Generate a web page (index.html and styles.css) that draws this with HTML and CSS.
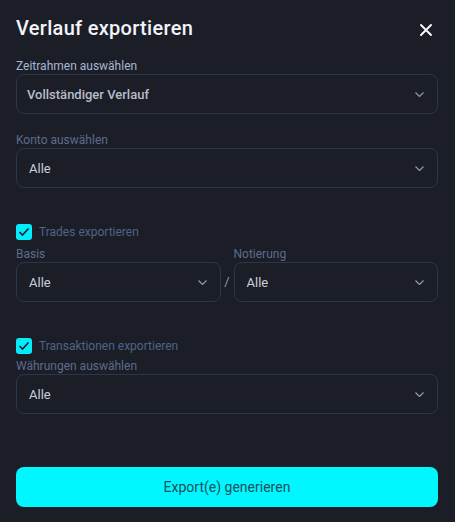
FILE: index.html
```html
<!DOCTYPE html>
<html lang="de">
<head>
<meta charset="utf-8">
<link rel="stylesheet" href="styles.css">
</head>
<body>
<div class="dialog">
  <div class="header">
    <h1 class="title">Verlauf exportieren</h1>
    <button class="close" aria-label="Schließen">
      <svg width="12" height="12" viewBox="0 0 12 12"><path d="M1 1L11 11M11 1L1 11" stroke="#ffffff" stroke-width="1.8" stroke-linecap="round"/></svg>
    </button>
  </div>

  <div class="field first">
    <div class="label label-active">Zeitrahmen auswählen</div>
    <div class="select"><span class="value strong">Vollständiger Verlauf</span><svg class="chev" width="9" height="5" viewBox="0 0 9 5"><path d="M0.5 0.5L4.5 4.5L8.5 0.5" fill="none" stroke="#8f98aa" stroke-width="1.2"/></svg></div>
  </div>

  <div class="field">
    <div class="label">Konto auswählen</div>
    <div class="select"><span class="value">Alle</span><svg class="chev" width="9" height="5" viewBox="0 0 9 5"><path d="M0.5 0.5L4.5 4.5L8.5 0.5" fill="none" stroke="#8f98aa" stroke-width="1.2"/></svg></div>
  </div>

  <div class="check-row">
    <span class="checkbox"><svg width="12" height="10" viewBox="0 0 12 10"><path d="M1.5 5L4.5 8L10.5 1.5" fill="none" stroke="#1b1e27" stroke-width="1.6"/></svg></span>
    <span class="check-label">Trades exportieren</span>
  </div>

  <div class="pair">
    <div class="col">
      <div class="label">Basis</div>
      <div class="select"><span class="value">Alle</span><svg class="chev" width="9" height="5" viewBox="0 0 9 5"><path d="M0.5 0.5L4.5 4.5L8.5 0.5" fill="none" stroke="#8f98aa" stroke-width="1.2"/></svg></div>
    </div>
    <span class="slash">/</span>
    <div class="col">
      <div class="label">Notierung</div>
      <div class="select"><span class="value">Alle</span><svg class="chev" width="9" height="5" viewBox="0 0 9 5"><path d="M0.5 0.5L4.5 4.5L8.5 0.5" fill="none" stroke="#8f98aa" stroke-width="1.2"/></svg></div>
    </div>
  </div>

  <div class="check-row">
    <span class="checkbox"><svg width="12" height="10" viewBox="0 0 12 10"><path d="M1.5 5L4.5 8L10.5 1.5" fill="none" stroke="#1b1e27" stroke-width="1.6"/></svg></span>
    <span class="check-label">Transaktionen exportieren</span>
  </div>

  <div class="field tight">
    <div class="label">Währungen auswählen</div>
    <div class="select"><span class="value">Alle</span><svg class="chev" width="9" height="5" viewBox="0 0 9 5"><path d="M0.5 0.5L4.5 4.5L8.5 0.5" fill="none" stroke="#8f98aa" stroke-width="1.2"/></svg></div>
  </div>

  <button class="primary">Export(e) generieren</button>
</div>
</body>
</html>
```

FILE: styles.css
```css
html, body {
  margin: 0;
  padding: 0;
  background: #1b1e27;
}
body {
  font-family: Roboto, "Noto Sans", "Liberation Sans", sans-serif;
  color: #c9cfdb;
}
.dialog {
  padding: 14px 17px 16px 16px;
  display: flex;
  flex-direction: column;
}
.header {
  display: flex;
  align-items: center;
  justify-content: space-between;
  height: 28px;
}
.title {
  margin: 0;
  font-size: 20px;
  line-height: 28px;
  font-weight: 500;
  color: #f2f4f8;
  letter-spacing: 0.3px;
}
.close {
  background: none;
  border: none;
  padding: 0;
  margin-right: 6px;
  margin-top: 4px;
  width: 12px;
  height: 12px;
  display: flex;
  cursor: pointer;
}
.field {
  display: flex;
  flex-direction: column;
  margin-top: 19px;
}
.field.first {
  margin-top: 17px;
}
.field.tight {
  margin-top: 5px;
}
.label {
  font-size: 12px;
  line-height: 14px;
  color: #5d6c8c;
  margin-bottom: 1px;
}
.label-active {
  color: #a9b6d3;
}
.select {
  height: 38px;
  border: 1px solid #2d3547;
  border-radius: 8px;
  display: flex;
  align-items: center;
  justify-content: space-between;
  padding: 0 13px 0 12px;
}
.value {
  font-size: 13px;
  color: #c9cfdb;
}
.value.strong {
  font-weight: 500;
  color: #b6bdca;
  margin-left: -2px;
}
.chev {
  display: block;
}
.check-row {
  display: flex;
  align-items: center;
  gap: 7px;
  margin-top: 36px;
  height: 16px;
}
.checkbox {
  width: 16px;
  height: 16px;
  border-radius: 3px;
  background: #00eefb;
  display: flex;
  align-items: center;
  justify-content: center;
}
.check-label {
  font-size: 12px;
  color: #52628a;
}
.pair {
  display: flex;
  align-items: flex-end;
  margin-top: 7px;
}
.col {
  flex: 1;
  display: flex;
  flex-direction: column;
}
.slash {
  width: 13px;
  text-align: center;
  font-size: 13px;
  color: #8f98aa;
  line-height: 40px;
}
.primary {
  margin-top: 53px;
  height: 40px;
  border: none;
  border-radius: 8px;
  background: #00f7ff;
  color: #1f4f5c;
  font-family: Roboto, "Noto Sans", "Liberation Sans", sans-serif;
  font-size: 14px;
  cursor: pointer;
}
```
